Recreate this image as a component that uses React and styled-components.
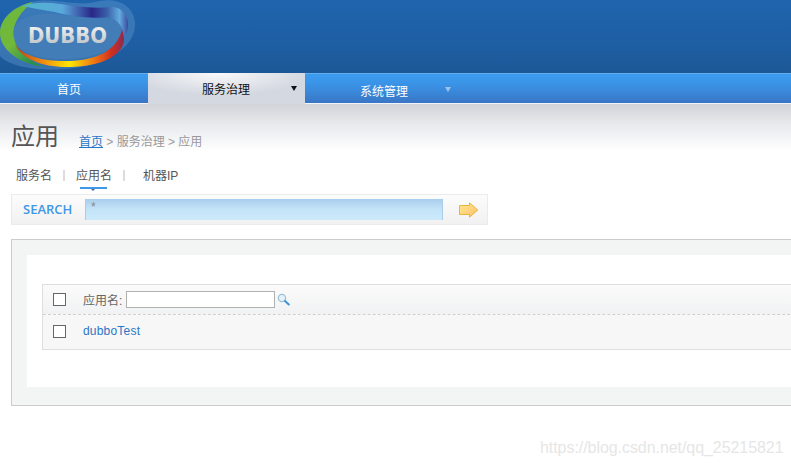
import React from 'react';
import styled, { createGlobalStyle } from 'styled-components';

const GlobalStyle = createGlobalStyle`
    html, body {
        margin: 0;
        height: 100%;
        overflow: hidden;
        background: #fff;
    }
    body {
        font-family: "Liberation Sans", "Noto Sans CJK SC", sans-serif;
        font-size: 12px;
        color: #555;
    }
`;

const Page = styled.div`
    position: relative;
    width: 791px;
    height: 466px;
    overflow: hidden;
`;

const Banner = styled.div`
    height: 73px;
    background: linear-gradient(#1f65ae, #1e5ea3 60%, #1c5897);
`;

const Nav = styled.nav`
    display: flex;
    height: 31px;
    box-sizing: border-box;
    background: linear-gradient(#3b9bee 8%, #3a8fe2 45%, #3a76c4);
    border-top: 1px solid #62aef0;
    border-bottom: 1px solid #f2f5f8;
`;

const NavItem = styled.a`
    position: relative;
    display: block;
    box-sizing: border-box;
    width: ${p => p.$width}px;
    height: ${p => (p.$active ? 31 : 29)}px;
    margin-top: ${p => (p.$active ? -1 : 0)}px;
    padding-left: ${p => p.$pad}px;
    padding-top: ${p => p.$top}px;
    font-size: 12px;
    line-height: 16px;
    color: ${p => (p.$active ? '#111' : '#fff')};
    background: ${p => (p.$active ? 'radial-gradient(ellipse 90px 22px at 45% 0, #f8f9fa, #d4d8e0)' : 'none')};
`;

const NavArrow = styled.span`
    position: absolute;
    left: ${p => p.$left}px;
    top: 13px;
    width: 0;
    height: 0;
    border-left: 3px solid transparent;
    border-right: 3px solid transparent;
    border-top: 5px solid ${p => p.$color};
`;

const PageHead = styled.div`
    height: 47px;
    padding: 19px 11px 0;
    box-sizing: border-box;
    display: flex;
    align-items: flex-start;
    background: linear-gradient(#d0d3d9, #e6e8eb 40%, #fff);
`;

const Title = styled.h1`
    margin: 0;
    font-size: 24px;
    line-height: 28px;
    font-weight: normal;
    color: #555;
`;

const Crumbs = styled.div`
    margin: 11px 0 0 20px;
    font-size: 12px;
    line-height: 16px;
    color: #999;
`;

const CrumbLink = styled.a`
    color: #2a76c6;
    text-decoration: underline;
`;

const Tabs = styled.div`
    display: flex;
    align-items: center;
    height: 43px;
    padding: 6px 0 0 16px;
    box-sizing: border-box;
`;

const Tab = styled.span`
    position: relative;
    width: ${p => p.$width}px;
    font-size: 12px;
    line-height: 16px;
    color: #555;
`;

const TabMark = styled.i`
    position: absolute;
    left: 4px;
    top: 19px;
    width: 27px;
    height: 2px;
    background: #3f97e8;
    &::after {
        content: '';
        position: absolute;
        left: 11px;
        top: 2px;
        border-left: 2px solid transparent;
        border-right: 2px solid transparent;
        border-top: 2px solid #3f6f9c;
    }
`;

const TabBar = styled.span`
    width: 2px;
    height: 11px;
    margin-right: ${p => p.$gap}px;
    background: #dcdcdc;
`;

const SearchBar = styled.div`
    display: flex;
    align-items: center;
    width: 477px;
    height: 31px;
    margin-left: 11px;
    box-sizing: border-box;
    border: 1px solid #ebebeb;
    background: linear-gradient(#fcfcfc, #f1f1f1);
`;

const SearchLabel = styled.span`
    width: 73px;
    padding: 0 0 2px 11px;
    box-sizing: border-box;
    font-family: "Open Sans", "Liberation Sans", sans-serif;
    font-size: 13px;
    font-weight: 600;
    color: #3f97e8;
`;

const SearchField = styled.div`
    width: 358px;
    height: 21px;
    padding: 1px 0 0 5px;
    box-sizing: border-box;
    font-size: 12px;
    line-height: 14px;
    color: #888;
    background: linear-gradient(#a9cdec, #c4e4f8 50%, #cbe9fa);
    border-left: 1px solid #a8cde4;
    border-right: 1px solid #a8cde4;
`;

const GoIcon = styled.svg`
    margin-left: 16px;
`;

const Panel = styled.div`
    width: 900px;
    height: 167px;
    margin: 14px 0 0 11px;
    padding: 15px;
    box-sizing: border-box;
    border: 1px solid #ccc;
    background: #f3f4f4;
`;

const PanelBody = styled.div`
    height: 132px;
    padding-top: 29px;
    box-sizing: border-box;
    background: #fff;
`;

const Table = styled.div`
    margin-left: 15px;
    border: 1px solid #dedede;
    border-right: 0;
    background: #f7f7f7;
`;

const Row = styled.div`
    display: flex;
    align-items: center;
    height: ${p => p.$height}px;
    box-sizing: border-box;
    padding-left: 10px;
    padding-bottom: ${p => (p.$head ? 0 : 2)}px;
    background: ${p => (p.$head ? 'linear-gradient(#fbfbfb, #f1f2f3)' : 'transparent')};
    border-bottom: ${p => (p.$head ? '1px dashed #cfcfcf' : '0')};
`;

const Check = styled.span`
    width: 11px;
    height: 11px;
    margin-right: 17px;
    border: 1px solid #666;
    background: #fff;
`;

const FilterLabel = styled.span`
    font-size: 12px;
    color: #666;
    margin-right: 4px;
`;

const FilterInput = styled.span`
    width: 147px;
    height: 15px;
    border: 1px solid #b0b0b0;
    background: #fff;
`;

const SearchIcon = styled.svg`
    margin-left: 2px;
`;

const AppLink = styled.a`
    font-size: 12px;
    letter-spacing: 0.2px;
    color: #2a76c6;
`;

const Watermark = styled.div`
    position: absolute;
    left: 540px;
    top: 438px;
    font-size: 16px;
    line-height: 20px;
    letter-spacing: -0.06px;
    color: #e6e6e6;
    white-space: nowrap;
`;

const LogoSvg = styled.svg`
    position: absolute;
    left: 0;
    top: 0;
`;

const Logo = () => (
    <LogoSvg width="140" height="72" viewBox="0 0 140 72">
        <defs>
            <linearGradient id="rainbow" x1="0" x2="1" y1="0" y2="0">
                <stop offset="0" stopColor="#b8401c" />
                <stop offset="0.25" stopColor="#f08a10" />
                <stop offset="0.5" stopColor="#ffe600" />
                <stop offset="0.72" stopColor="#ee7a14" />
                <stop offset="0.88" stopColor="#d4301e" />
                <stop offset="1" stopColor="#8a2a50" />
            </linearGradient>
            <linearGradient id="leaf" x1="0" x2="0.6" y1="0" y2="1">
                <stop offset="0" stopColor="#6db83c" />
                <stop offset="0.6" stopColor="#72b83a" />
                <stop offset="1" stopColor="#2b8f50" />
            </linearGradient>
            <linearGradient id="topband" x1="0" x2="1" y1="0" y2="0">
                <stop offset="0" stopColor="#4fb4cc" />
                <stop offset="0.38" stopColor="#5aa8dc" />
                <stop offset="0.66" stopColor="#2a2688" />
                <stop offset="0.8" stopColor="#3a5ea8" />
                <stop offset="0.92" stopColor="#62ace0" />
                <stop offset="1" stopColor="#3a4a9c" />
            </linearGradient>
            <linearGradient id="plate" x1="0" x2="0" y1="0" y2="1">
                <stop offset="0" stopColor="#f6f6f6" />
                <stop offset="1" stopColor="#b8bcc0" />
            </linearGradient>
        </defs>
        <path d="M0 30C4 8 30 -2 55 1C75 3 85 5 100 1C120 -3 136 8 135 26C134 48 105 64 75 68C45 72 10 68 0 56Z" fill="#5b93c9" opacity="0.45" />
        <path d="M13 33C14 18 36 12 55 14C75 16 100 20 112 18C122 22 124 32 118 42C105 56 80 60 55 59C30 58 12 48 13 33Z" fill="#427db8" />
        <path d="M33 2C15 6 0 18 0 33C0 50 20 64 44 67C28 60 16 50 14 38C11 26 20 12 33 2Z" fill="url(#leaf)" />
        <path d="M15 44C22 56 45 62 70 61C95 60 116 52 122 30C125 36 125 44 120 50C110 62 90 67 66 67C42 67 20 58 15 44Z" fill="url(#rainbow)" />
        <path d="M22 6C40 0 60 4 75 6C90 8 100 8 112 7C122 7 129 16 128 26C128 30 126 34 124 38C124 28 118 19 108 17C90 19 70 16 55 12C42 10 32 8 22 6Z" fill="url(#topband)" />
        <text x="28" y="43" fontFamily="'DejaVu Sans', sans-serif" fontWeight="bold" fontSize="20.5" fill="url(#plate)" textLength="79" lengthAdjust="spacingAndGlyphs">DUBBO</text>
    </LogoSvg>
);

const GoArrow = () => (
    <GoIcon width="20" height="16" viewBox="0 0 20 16">
        <defs>
            <linearGradient id="go" x1="0" x2="1" y1="0" y2="1">
                <stop offset="0" stopColor="#ffe98c" />
                <stop offset="1" stopColor="#ffbe70" />
            </linearGradient>
        </defs>
        <path d="M0.5 3.5H10.5V0.8L18.8 8L10.5 15.2V12.5H0.5Z" fill="url(#go)" stroke="#e6b73c" />
    </GoIcon>
);

const Magnifier = () => (
    <SearchIcon width="13" height="13" viewBox="0 0 13 13">
        <circle cx="5" cy="5" r="3.6" fill="#e6f2fa" stroke="#9cc0d8" strokeWidth="1.3" />
        <path d="M8 8L11.8 11.5" stroke="#3f94d8" strokeWidth="2" strokeLinecap="round" />
    </SearchIcon>
);

export default function App() {
    return (
        <Page>
            <GlobalStyle />
            <Banner />
            <Logo />
            <Nav>
                <NavItem $width={148} $pad={57} $top={8}>首页</NavItem>
                <NavItem $width={157} $pad={54} $top={9} $active>
                    服务治理
                    <NavArrow $left={143} $color="#111" />
                </NavItem>
                <NavItem $width={200} $pad={55} $top={10}>
                    系统管理
                    <NavArrow $left={140} $color="#9cc4ee" />
                </NavItem>
            </Nav>
            <PageHead>
                <Title>应用</Title>
                <Crumbs>
                    <CrumbLink>首页</CrumbLink> &gt; 服务治理 &gt; 应用
                </Crumbs>
            </PageHead>
            <Tabs>
                <Tab $width={47}>服务名</Tab>
                <TabBar $gap={11} />
                <Tab $width={47}>应用名<TabMark /></Tab>
                <TabBar $gap={18} />
                <Tab $width={60}>机器IP</Tab>
            </Tabs>
            <SearchBar>
                <SearchLabel>SEARCH</SearchLabel>
                <SearchField>*</SearchField>
                <GoArrow />
            </SearchBar>
            <Panel>
                <PanelBody>
                    <Table>
                        <Row $height={30} $head>
                            <Check />
                            <FilterLabel>应用名:</FilterLabel>
                            <FilterInput />
                            <Magnifier />
                        </Row>
                        <Row $height={34}>
                            <Check />
                            <AppLink>dubboTest</AppLink>
                        </Row>
                    </Table>
                </PanelBody>
            </Panel>
            <Watermark>https://blog.csdn.net/qq_25215821</Watermark>
        </Page>
    );
}
